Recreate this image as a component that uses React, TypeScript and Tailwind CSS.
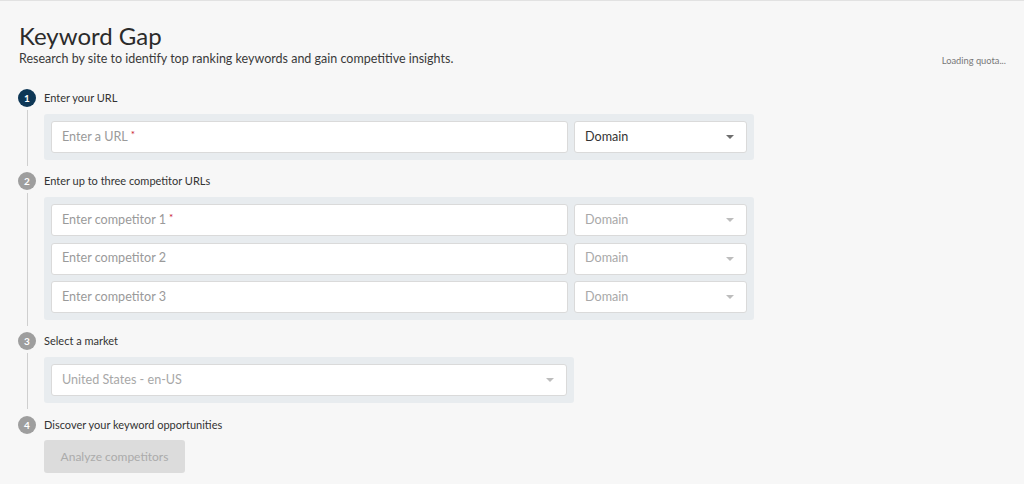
import React from "react";

const Caret = ({ dark }: { dark?: boolean }) => (
  <svg width="8" height="4" viewBox="0 0 8 4" className="shrink-0">
    <path d="M0 0 L8 0 L4 4 Z" fill={dark ? "#6e6e6e" : "#bdbdbd"} />
  </svg>
);

const Circle = ({ n, active }: { n: number; active?: boolean }) => (
  <div
    className={`w-[18px] h-[18px] rounded-full flex items-center justify-center text-[10px] font-bold text-white leading-none ${
      active ? "bg-[#0e3756]" : "bg-[#9e9e9e]"
    }`}
  >
    {n}
  </div>
);

const Input = ({ text, required }: { text: string; required?: boolean }) => (
  <div className="flex-1 h-[32px] bg-white border border-[#dadada] rounded-[3px] flex items-center px-[10px] text-[12.6px] text-[#9a9a9a]">
    {text}
    {required && <span className="text-[#c8102e] text-[10px] ml-[3px] -mt-[5px]">*</span>}
  </div>
);

const Select = ({ text, dark, className }: { text: string; dark?: boolean; className?: string }) => (
  <div
    className={`h-[32px] bg-white border border-[#dadada] rounded-[3px] flex items-center justify-between pl-[10px] pr-[12px] text-[12.6px] ${
      dark ? "text-[#333333]" : "text-[#a8a8a8]"
    } ${className ?? ""}`}
  >
    <span>{text}</span>
    <Caret dark={dark} />
  </div>
);

const Step = ({
  n,
  label,
  active,
  last,
  children,
  className,
}: {
  n: number;
  label: string;
  active?: boolean;
  last?: boolean;
  children: React.ReactNode;
  className?: string;
}) => (
  <div className={`flex ${className ?? ""}`}>
    <div className="w-[26px] flex flex-col shrink-0">
      <Circle n={n} active={active} />
      {!last && <div className="flex-1 w-px bg-[#cfcfcf] ml-[9px] mt-[3px] -mb-[6px]" />}
    </div>
    <div className="flex flex-col">
      <div className="h-[18px] flex items-center text-[11px] text-[#333333]">{label}</div>
      <div className="mt-[7px]">{children}</div>
    </div>
  </div>
);

export default function App() {
  return (
    <div
      className="w-[1024px] h-[484px] bg-[#f7f7f7] border-t border-[#e2e2e2] overflow-hidden"
      style={{ fontFamily: "Lato, 'Open Sans', sans-serif" }}
    >
      <div className="pl-[18px] pr-[18px] pt-[20px]">
        <h1 className="text-[24px] leading-[29px] text-[#2b2b2b] ml-[1px]">Keyword Gap</h1>
        <div className="flex items-end justify-between mt-[1px]">
          <p className="text-[12.5px] leading-[16px] text-[#3a3a3a] ml-[1px]">
            Research by site to identify top ranking keywords and gain competitive insights.
          </p>
          <span className="text-[9.3px] leading-[14px] text-[#777777] -mb-[1px]">Loading quota...</span>
        </div>

        <Step n={1} label="Enter your URL" active className="mt-[22px]">
          <div className="w-[710px] bg-[#e8ecef] rounded-[3px] p-[7px] flex gap-[6px]">
            <Input text="Enter a URL" required />
            <Select text="Domain" dark className="w-[173px]" />
          </div>
        </Step>

        <Step n={2} label="Enter up to three competitor URLs" className="mt-[12px]">
          <div className="w-[710px] bg-[#e8ecef] rounded-[3px] p-[7px] flex flex-col gap-[6.5px]">
            {["Enter competitor 1", "Enter competitor 2", "Enter competitor 3"].map((t, i) => (
              <div key={t} className="flex gap-[6px]">
                <Input text={t} required={i === 0} />
                <Select text="Domain" className="w-[173px]" />
              </div>
            ))}
          </div>
        </Step>

        <Step n={3} label="Select a market" className="mt-[12px]">
          <div className="w-[530px] bg-[#e8ecef] rounded-[3px] p-[7px] flex">
            <Select text="United States - en-US" className="flex-1" />
          </div>
        </Step>

        <Step n={4} label="Discover your keyword opportunities" last className="mt-[13px]">
          <button className="w-[141px] h-[33px] bg-[#dcdcdc] rounded-[3px] text-[12px] text-[#ababab] -mt-[1px]">
            Analyze competitors
          </button>
        </Step>
      </div>
    </div>
  );
}
